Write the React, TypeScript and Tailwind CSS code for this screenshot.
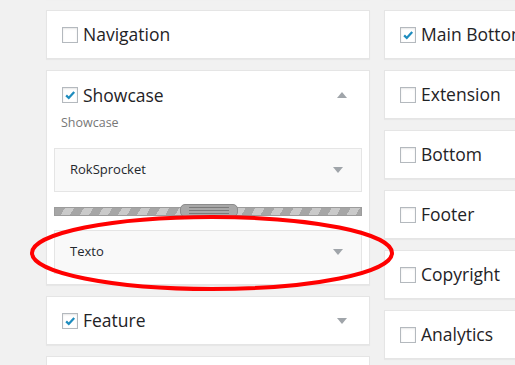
import React from "react";

const font = { fontFamily: '"Open Sans", "Liberation Sans", sans-serif' };

function Checkbox({ checked }: { checked?: boolean }) {
  return (
    <span className="flex h-4 w-4 shrink-0 items-center justify-center border border-[#b4b9be] bg-white shadow-[inset_0_1px_2px_rgba(0,0,0,0.1)]">
      {checked && (
        <svg viewBox="0 0 16 16" className="h-4 w-4">
          <path d="M3.6 8.4 L6.6 11.4 L12.8 4.6" fill="none" stroke="#1e8cbe" strokeWidth="2.6" strokeLinejoin="miter" />
        </svg>
      )}
    </span>
  );
}

function Arrow({ up }: { up?: boolean }) {
  return (
    <svg viewBox="0 0 10 6" className="h-[6px] w-[10px]">
      <path d={up ? "M0 6 L5 0 L10 6 Z" : "M0 0 L10 0 L5 6 Z"} fill="#a0a5aa" />
    </svg>
  );
}

function Card({ label, checked, arrow }: { label: string; checked?: boolean; arrow?: boolean }) {
  return (
    <div className="flex h-[49px] shrink-0 items-center gap-[5px] border border-[#e5e5e5] bg-white pl-[15px] pr-[22px] shadow-[0_1px_1px_rgba(0,0,0,0.04)]">
      <Checkbox checked={checked} />
      <span className="flex-1 whitespace-nowrap text-[17.5px] text-[#1f2326]">{label}</span>
      {arrow && <Arrow />}
    </div>
  );
}

function SubBox({ label }: { label: string }) {
  return (
    <div className="flex h-[44px] items-center border border-[#e5e5e5] bg-[#f9f9f9] pl-[15px] pr-[18px]">
      <span className="flex-1 text-[13px] text-[#23282d]">{label}</span>
      <Arrow />
    </div>
  );
}

export default function App() {
  return (
    <div className="relative flex h-[365px] w-[515px] gap-[14px] overflow-hidden bg-[#f1f1f1] pl-[46px] pt-[10px]" style={font}>
      <div className="flex w-[324px] shrink-0 flex-col gap-[11px]">
        <div className="-mt-[60px] h-[49px] shrink-0 border border-[#e5e5e5] bg-white shadow-[0_1px_1px_rgba(0,0,0,0.04)]" />
        <Card label="Navigation" />
        <div className="shrink-0 border border-[#e5e5e5] bg-white px-[7px] pb-[10px] shadow-[0_1px_1px_rgba(0,0,0,0.04)]">
          <div className="flex h-[48px] items-center gap-[5px] pl-[8px] pr-[15px]">
            <Checkbox checked />
            <span className="flex-1 text-[17.5px] text-[#1f2326]">Showcase</span>
            <Arrow up />
          </div>
          <div className="-mt-[5px] pl-[7px] text-[12.5px] leading-[18px] text-[#777]">Showcase</div>
          <div className="mt-[16px]">
            <SubBox label="RokSprocket" />
          </div>
          <div className="relative mt-[15px] h-[9px] border border-[#9c9c9c] bg-[repeating-linear-gradient(120deg,#a6a6a6_0_8.5px,#cacaca_8.5px_16.5px)]">
            <div className="absolute left-[125px] top-[-4px] flex h-[13px] w-[58px] flex-col items-center justify-center gap-[2px] rounded-[5px] border border-[#8c8c8c] bg-[#a8a8a8]">
              <span className="h-px w-[40px] bg-[#7a7a7a]" />
              <span className="h-px w-[40px] bg-[#7a7a7a]" />
              <span className="h-px w-[40px] bg-[#7a7a7a]" />
            </div>
          </div>
          <div className="mt-[14px]">
            <SubBox label="Texto" />
          </div>
        </div>
        <Card label="Feature" checked arrow />
        <div className="h-[49px] shrink-0 border border-[#e5e5e5] bg-white" />
      </div>
      <div className="flex w-[324px] shrink-0 flex-col gap-[11px]">
        <div className="-mt-[60px] h-[49px] shrink-0 border border-[#e5e5e5] bg-white shadow-[0_1px_1px_rgba(0,0,0,0.04)]" />
        <Card label="Main Bottom" checked />
        <Card label="Extension" />
        <Card label="Bottom" />
        <Card label="Footer" />
        <Card label="Copyright" />
        <Card label="Analytics" />
      </div>
      <svg className="pointer-events-none absolute left-0 top-0" width="515" height="365">
        <ellipse cx="212" cy="253" rx="180" ry="36" fill="none" stroke="#f00" strokeWidth="4" />
      </svg>
    </div>
  );
}
